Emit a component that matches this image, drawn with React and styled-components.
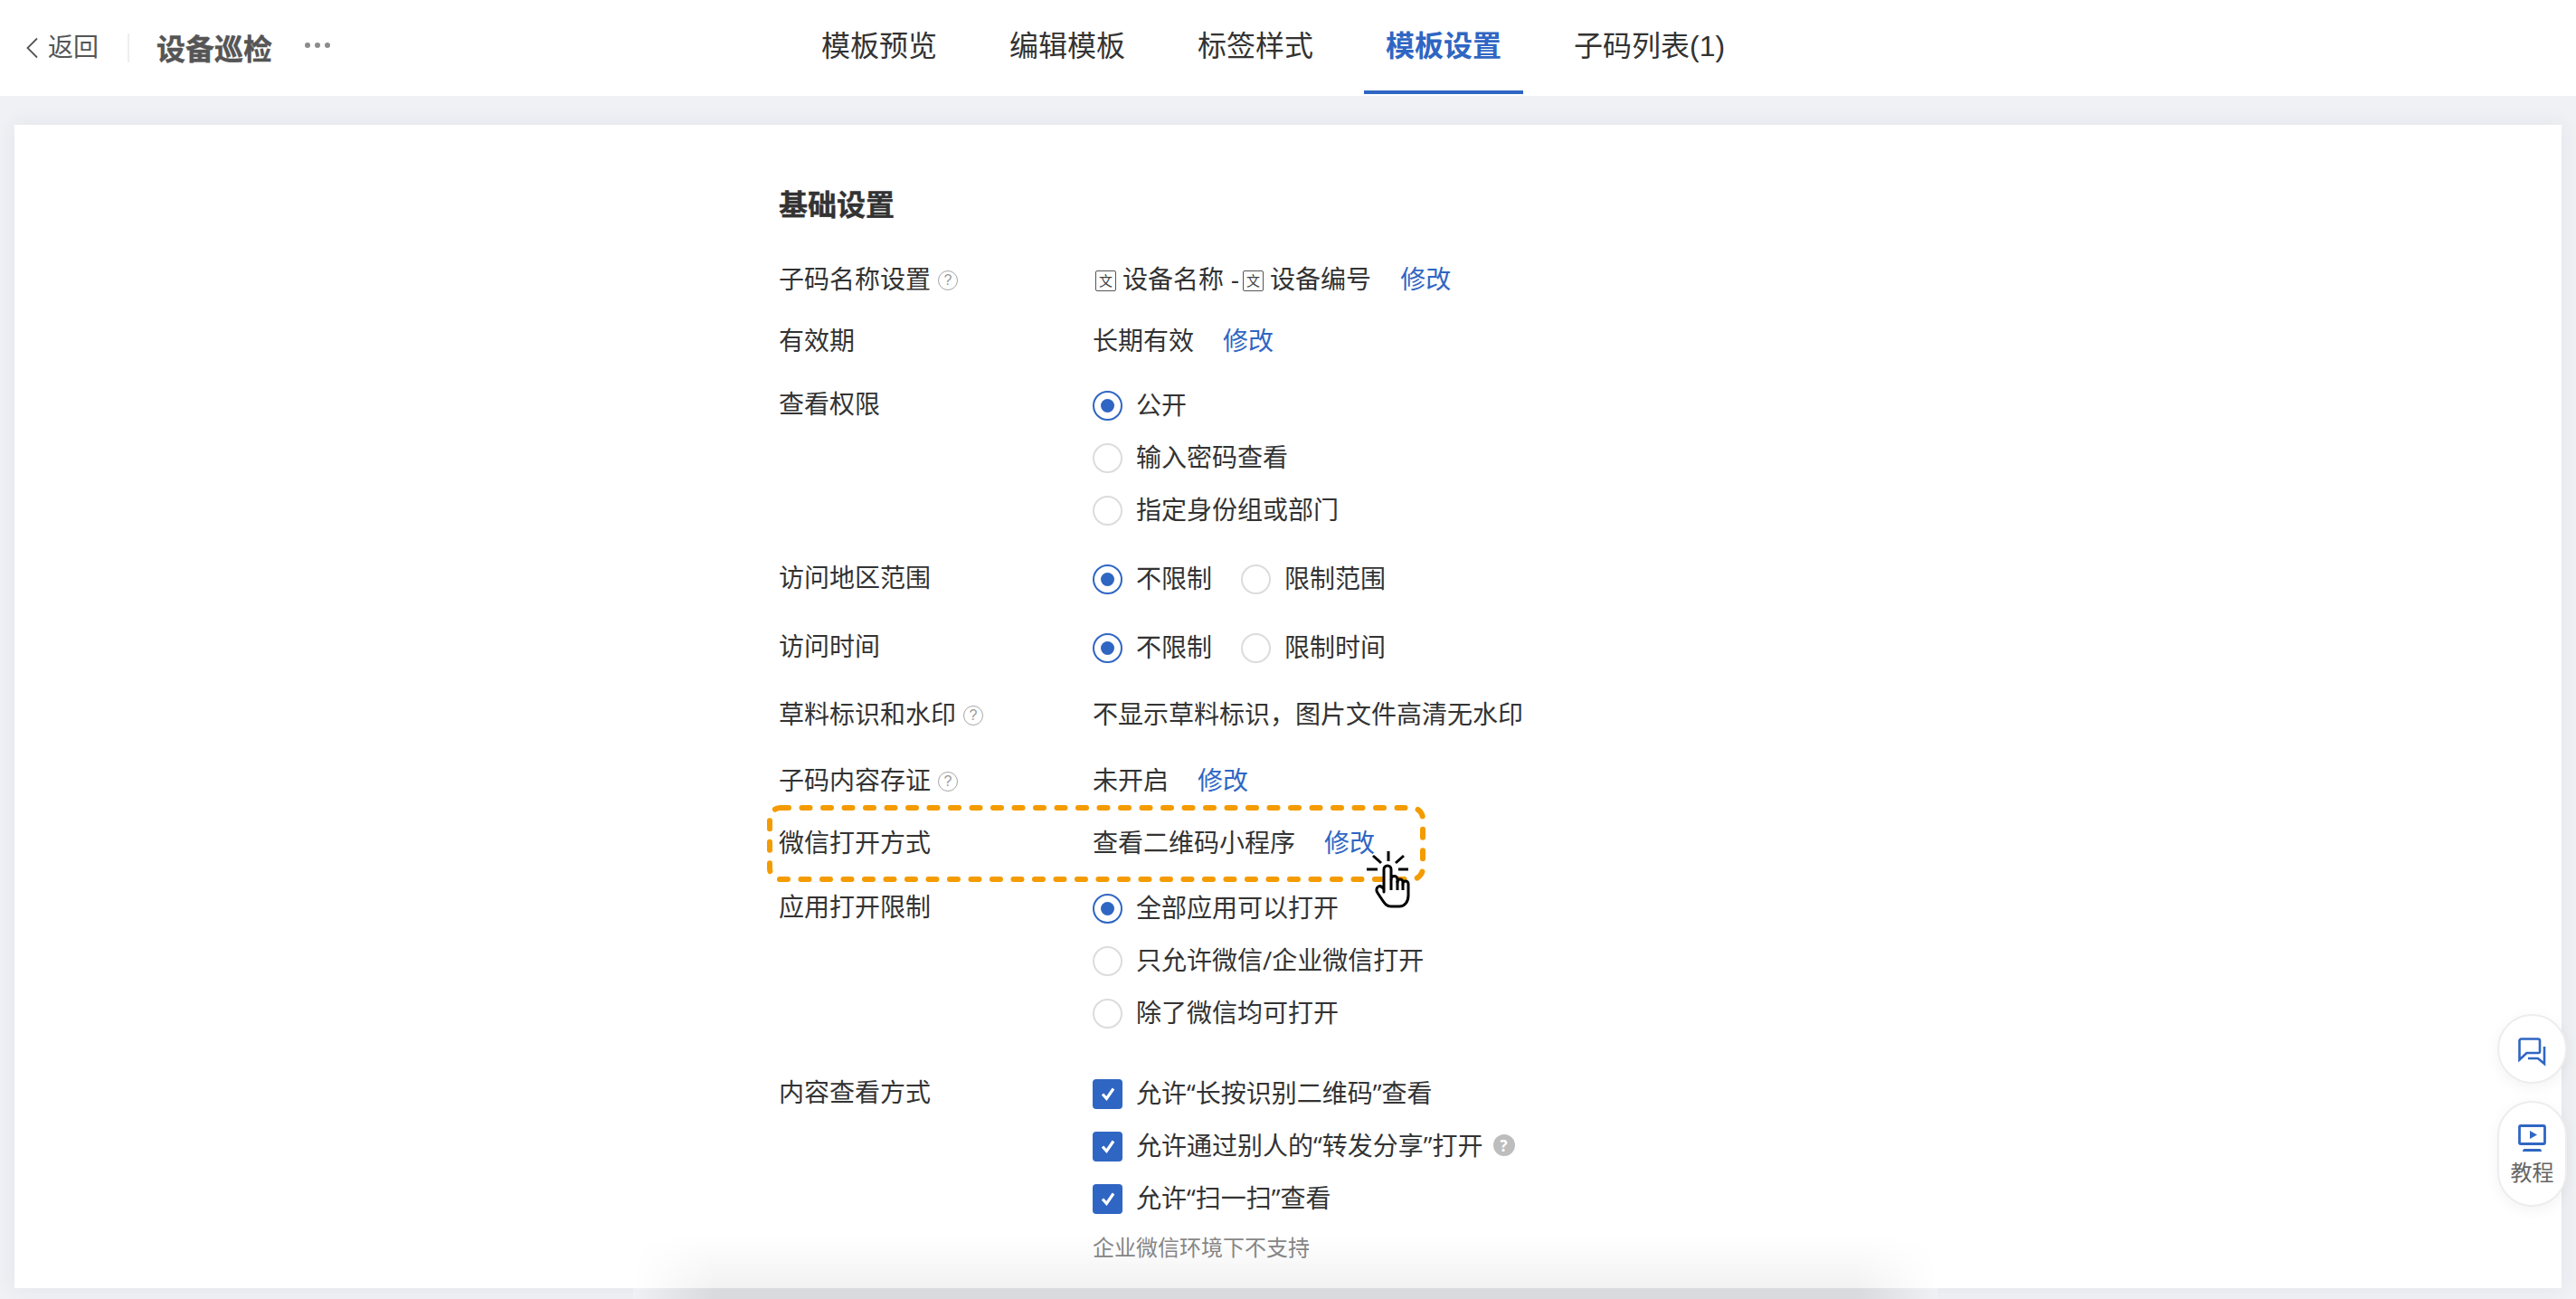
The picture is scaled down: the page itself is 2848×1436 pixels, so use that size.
import React from "react";
import styled, { createGlobalStyle } from "styled-components";

const BLUE = "#2f66c3";
const FONT = `"Liberation Sans", "Noto Sans CJK SC", sans-serif`;

const Global = createGlobalStyle`
  html, body { margin: 0; padding: 0; height: 100%; overflow: hidden; }
  body { background: #f0f1f5; font-family: ${FONT}; color: #333; }
  * { box-sizing: border-box; }
`;

const Page = styled.div`
  display: flex;
  flex-direction: column;
  height: 1436px;
  position: relative;
  overflow: hidden;
`;

const Header = styled.header`
  display: flex;
  align-items: stretch;
  height: 106px;
  background: #fff;
  flex: none;
`;

const HeaderLeft = styled.div`
  width: 884px;
  display: flex;
  align-items: center;
  padding-left: 29px;
`;

const BackLink = styled.span`
  display: flex;
  align-items: center;
  gap: 11px;
  width: 112px;
  font-size: 28px;
  line-height: 40px;
  color: #555;
`;

const Divider = styled.span`
  width: 2px;
  height: 32px;
  background: #eeeeee;
  margin-right: 30px;
`;

const PageTitle = styled.h1`
  margin: 4px 36px 0 0;
  font-size: 32px;
  line-height: 40px;
  font-weight: 700;
  color: #555;
  -webkit-text-stroke: 0.4px #555;
`;

const Dots = styled.span`
  display: flex;
  gap: 5px;
  margin-top: -6px;
`;

const Dot = styled.i`
  width: 6px;
  height: 6px;
  border-radius: 50%;
  background: #8c8c8c;
`;

const Tabs = styled.nav`
  display: flex;
  gap: 32px;
  height: 104px;
`;

const Tab = styled.a`
  padding: 0 24px;
  font-size: 32px;
  line-height: 102px;
  white-space: nowrap;
  font-weight: ${(p) => (p.$active ? 700 : 400)};
  color: ${(p) => (p.$active ? BLUE : "#333")};
  border-bottom: 4px solid ${(p) => (p.$active ? BLUE : "transparent")};
`;

const Main = styled.main`
  flex: 1;
  min-height: 0;
  padding: 32px 16px 12px;
`;

const Card = styled.section`
  position: relative;
  height: 100%;
  padding: 69px 0 0 845px;
  background: #fff;
  box-shadow: 0 0 22px rgba(40, 50, 80, 0.07);
`;

const SectionTitle = styled.h2`
  margin: 0 0 43px;
  font-size: 32px;
  line-height: 40px;
  font-weight: 700;
  color: #333;
  -webkit-text-stroke: 0.4px #333;
`;

const Row = styled.div`
  position: relative;
  display: flex;
  align-items: flex-start;
  margin-top: ${(p) => p.$top || 0}px;
  font-size: 28px;
  line-height: 40px;
  color: #333;
`;

const Label = styled.div`
  width: 347px;
  flex: none;
  display: flex;
  align-items: center;
  gap: 8px;
`;

const Value = styled.div`
  display: flex;
  align-items: center;
  white-space: nowrap;
`;

const Stack = styled.div`
  display: flex;
  flex-direction: column;
  gap: ${(p) => p.$gap || 18}px;
`;

const Inline = styled.div`
  display: flex;
  align-items: center;
  gap: 32px;
`;

const Edit = styled.a`
  color: ${BLUE};
  margin-left: ${(p) => p.$left ?? 32}px;
`;

const FieldTag = styled.span`
  width: 23px;
  height: 23px;
  flex: none;
  margin: 0 7px 0 ${(p) => p.$left}px;
  border: 1.5px solid #555;
  border-radius: 2px;
  display: flex;
  align-items: center;
  justify-content: center;
  font-size: 15px;
  line-height: 1;
  color: #444;
`;

const Help = styled.span`
  width: 22px;
  height: 22px;
  flex: none;
  border: 1.5px solid #a6a6a6;
  border-radius: 50%;
  display: inline-flex;
  align-items: center;
  justify-content: center;
  font-size: 16px;
  line-height: 1;
  color: #999;
`;

const HelpFilled = styled.span`
  width: 24px;
  height: 24px;
  border-radius: 50%;
  background: #bdbdbd;
  display: inline-flex;
  align-items: center;
  justify-content: center;
  font-size: 17px;
  font-weight: 700;
  line-height: 1;
  color: #fff;
  margin-left: -4px;
`;

const Option = styled.label`
  display: flex;
  align-items: center;
  gap: 15px;
  height: 40px;
  padding-bottom: 2px;
  white-space: nowrap;
  font-family: "Open Sans", "Noto Sans CJK SC", sans-serif;
`;

const RadioMark = styled.span`
  width: 33px;
  height: 33px;
  flex: none;
  margin-top: 2px;
  border-radius: 50%;
  border: 2px solid ${(p) => (p.$on ? BLUE : "#dcdcdc")};
  display: flex;
  align-items: center;
  justify-content: center;
  &::after {
    content: "";
    width: 15px;
    height: 15px;
    border-radius: 50%;
    background: ${(p) => (p.$on ? BLUE : "transparent")};
  }
`;

const CheckMark = styled.span`
  width: 33px;
  height: 33px;
  flex: none;
  margin-top: 2px;
  border-radius: 4px;
  background: ${BLUE};
  display: flex;
  align-items: center;
  justify-content: center;
`;

const Hint = styled.div`
  margin-top: -3px;
  font-size: 24px;
  line-height: 40px;
  color: #888;
`;

const DashFrame = styled.svg`
  position: absolute;
  left: -13px;
  top: -23px;
  pointer-events: none;
`;

const HandCursor = styled.svg`
  position: absolute;
  left: 644px;
  top: 23px;
  z-index: 2;
`;

const FloatGroup = styled.aside`
  position: absolute;
  right: 10px;
  bottom: 102px;
  display: flex;
  flex-direction: column;
  gap: 19px;
  z-index: 3;
`;

const FloatButton = styled.button`
  width: 77px;
  height: ${(p) => p.$h}px;
  padding: 24px 0 0;
  border: 2px solid #ededed;
  border-radius: 39px;
  background: #fff;
  box-shadow: 0 4px 16px rgba(0, 0, 0, 0.05);
  display: flex;
  flex-direction: column;
  justify-content: flex-start;
  align-items: center;
  gap: 7px;
  font-family: ${FONT};
  font-size: 24px;
  line-height: 34px;
  color: #666;
`;

const BottomShade = styled.div`
  position: absolute;
  left: 684px;
  right: 690px;
  bottom: 0;
  height: 58px;
  background: linear-gradient(180deg, rgba(0, 0, 0, 0), rgba(0, 0, 0, 0.05));
  mask-image: linear-gradient(90deg, transparent, #000 90px, #000 calc(100% - 90px), transparent);
  pointer-events: none;
`;

const BottomBand = styled.div`
  position: absolute;
  left: 700px;
  right: 706px;
  bottom: 0;
  height: 12px;
  background: linear-gradient(90deg, #f0f1f5, #d9dade 90px, #d9dade calc(100% - 90px), #f0f1f5);
`;

const Radio = ({ on, children }) => (
  <Option>
    <RadioMark $on={on} />
    {children}
  </Option>
);

const Check = ({ children }) => (
  <Option>
    <CheckMark>
      <svg width="20" height="20" viewBox="0 0 20 20" fill="none">
        <path d="M4 10.5l4.4 5L16 4.5" stroke="#fff" strokeWidth="3.2" />
      </svg>
    </CheckMark>
    {children}
  </Option>
);

const Tag = ({ left }) => <FieldTag $left={left}>文</FieldTag>;

const tabs = ["模板预览", "编辑模板", "标签样式", "模板设置", "子码列表(1)"];

export default function App() {
  return (
    <Page>
      <Global />
      <Header>
        <HeaderLeft>
          <BackLink>
            <svg width="13" height="24" viewBox="0 0 13 24" fill="none">
              <path d="M12 1.5L1.5 12 12 22.5" stroke="#555" strokeWidth="1.8" />
            </svg>
            返回
          </BackLink>
          <Divider />
          <PageTitle>设备巡检</PageTitle>
          <Dots>
            <Dot />
            <Dot />
            <Dot />
          </Dots>
        </HeaderLeft>
        <Tabs>
          {tabs.map((t) => (
            <Tab key={t} $active={t === "模板设置"}>
              {t}
            </Tab>
          ))}
        </Tabs>
      </Header>
      <Main>
        <Card>
          <SectionTitle>基础设置</SectionTitle>
          <Row>
            <Label>
              子码名称设置
              <Help>?</Help>
            </Label>
            <Value>
              <Tag left={3} />
              设备名称 -
              <Tag left={4} />
              设备编号
              <Edit>修改</Edit>
            </Value>
          </Row>
          <Row $top={28}>
            <Label>有效期</Label>
            <Value>
              长期有效
              <Edit>修改</Edit>
            </Value>
          </Row>
          <Row $top={30}>
            <Label>查看权限</Label>
            <Stack>
              <Radio on>公开</Radio>
              <Radio>输入密码查看</Radio>
              <Radio>指定身份组或部门</Radio>
            </Stack>
          </Row>
          <Row $top={36}>
            <Label>访问地区范围</Label>
            <Inline>
              <Radio on>不限制</Radio>
              <Radio>限制范围</Radio>
            </Inline>
          </Row>
          <Row $top={36}>
            <Label>访问时间</Label>
            <Inline>
              <Radio on>不限制</Radio>
              <Radio>限制时间</Radio>
            </Inline>
          </Row>
          <Row $top={35}>
            <Label>
              草料标识和水印
              <Help>?</Help>
            </Label>
            <Value>不显示草料标识，图片文件高清无水印</Value>
          </Row>
          <Row $top={33}>
            <Label>
              子码内容存证
              <Help>?</Help>
            </Label>
            <Value>
              未开启
              <Edit>修改</Edit>
            </Value>
          </Row>
          <Row $top={29}>
            <DashFrame width="728" height="85" viewBox="0 0 728 85" fill="none">
              <rect
                x="3"
                y="3"
                width="722"
                height="79"
                rx="12"
                stroke="#f49b00"
                strokeWidth="6"
                strokeLinecap="round"
                strokeDasharray="9 14.5"
              />
            </DashFrame>
            <Label>微信打开方式</Label>
            <Value>
              查看二维码小程序
              <Edit>修改</Edit>
            </Value>
            <HandCursor width="60" height="70" viewBox="0 0 60 70" fill="none">
              <g stroke="#000" strokeWidth="3" strokeLinecap="butt">
                <path d="M30 5v11M13 10l9 8M47 10l-9 8M6 25h12M41 25h11" />
                <path
                  d="M25 50V25a4 4 0 0 1 8 0v11a3.5 3.5 0 0 1 7 0v3a3 3 0 0 1 6 0v2a3 3 0 0 1 6 0v13c0 7-4 12-10 12H33c-5 0-7-3-9-6l-6-9c-2-3-1-6 1-7 2-1 4 0 6 3z"
                  fill="#fff"
                  strokeLinejoin="round"
                />
                <path d="M33 36v12M40 38v10M46 41v7" />
              </g>
            </HandCursor>
          </Row>
          <Row $top={31}>
            <Label>应用打开限制</Label>
            <Stack>
              <Radio on>全部应用可以打开</Radio>
              <Radio>只允许微信/企业微信打开</Radio>
              <Radio>除了微信均可打开</Radio>
            </Stack>
          </Row>
          <Row $top={49}>
            <Label>内容查看方式</Label>
            <Stack>
              <Check>允许“长按识别二维码”查看</Check>
              <Check>
                <span>允许通过别人的“转发分享”打开</span>
                <HelpFilled>?</HelpFilled>
              </Check>
              <Check>允许“扫一扫”查看</Check>
              <Hint>企业微信环境下不支持</Hint>
            </Stack>
          </Row>
          <BottomShade />
        </Card>
      </Main>
      <BottomBand />
      <FloatGroup>
        <FloatButton $h={77}>
          <svg width="31" height="32" viewBox="0 0 31 32" fill="none">
            <path
              d="M1.5 24.5V3.5a2 2 0 0 1 2-2H22a2 2 0 0 1 2 2V15.5a1.5 1.5 0 0 1-1.5 1.5H9.5z"
              stroke={BLUE}
              strokeWidth="2.6"
            />
            <path d="M29 10v19l-7-6H11" stroke={BLUE} strokeWidth="2.6" />
          </svg>
        </FloatButton>
        <FloatButton $h={117}>
          <svg width="31" height="30" viewBox="0 0 31 30" fill="none">
            <rect x="1.5" y="1.5" width="28" height="20" rx="1.5" stroke={BLUE} strokeWidth="2.8" />
            <path d="M13 7l8 4.5-8 4.5z" fill={BLUE} />
            <path d="M5 30c0-2 1-3 3-3h15c2 0 3 1 3 3z" fill={BLUE} />
          </svg>
          教程
        </FloatButton>
      </FloatGroup>
    </Page>
  );
}
